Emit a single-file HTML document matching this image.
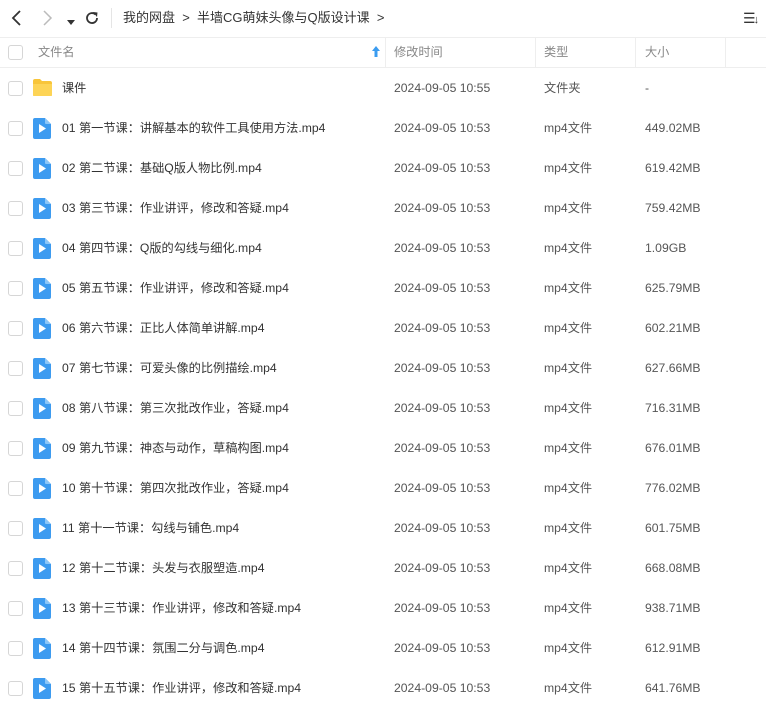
<!DOCTYPE html>
<html><head><meta charset="utf-8"><style>
body{margin:0;width:766px;height:713px;background:#fff;font-family:"Liberation Sans","Noto Sans CJK SC",sans-serif;color:#333;font-size:12.2px;overflow:hidden;position:relative}
.a{position:absolute;white-space:nowrap;line-height:16px}
.cb{position:absolute;left:8px;width:13px;height:13px;border:1px solid #d6d6d6;border-radius:3px;background:#fff}
.hd{color:#888}
.g{color:#555}
</style></head><body>
<div class="a" style="left:10px;top:9px">
<svg width="14" height="18" viewBox="0 0 14 18"><path d="M10 2 L3 9 L10 16" stroke="#333" stroke-width="1.8" fill="none"/></svg></div>
<div class="a" style="left:40px;top:9px"><svg width="14" height="18" viewBox="0 0 14 18"><path d="M4 2 L11 9 L4 16" stroke="#bbb" stroke-width="1.5" fill="none"/></svg></div>
<div class="a" style="left:67px;top:14px"><svg width="8" height="7"><path d="M0 1 L8 1 L4 6Z" fill="#333"/></svg></div>
<div class="a" style="left:84px;top:10px"><svg width="16" height="16" viewBox="0 0 16 16"><path d="M13 8 A5 5 0 1 1 11.5 4.5" stroke="#333" stroke-width="1.8" fill="none"/><path d="M9 2 L13.5 2.5 L13 7Z" fill="#333"/></svg></div>
<div class="a" style="left:111px;top:8px;width:1px;height:20px;background:#e5e5e5"></div>
<div class="a" style="left:123px;top:10px;font-size:13px">我的网盘 &nbsp;&gt;&nbsp; 半墙CG萌妹头像与Q版设计课 &nbsp;&gt;</div>
<div class="a" style="left:743px;top:10px;font-size:14px">☰<span style="font-size:11px;margin-left:-2px">↓</span></div>
<div class="a" style="left:0;top:37px;width:766px;height:1px;background:#eee"></div>
<div class="a" style="left:0;top:67px;width:766px;height:1px;background:#eee"></div>
<div class="a" style="left:385px;top:38px;width:1px;height:29px;background:#eee"></div>
<div class="a" style="left:535px;top:38px;width:1px;height:29px;background:#eee"></div>
<div class="a" style="left:635px;top:38px;width:1px;height:29px;background:#eee"></div>
<div class="a" style="left:725px;top:38px;width:1px;height:29px;background:#eee"></div>
<div class="cb" style="top:45px"></div>
<div class="a hd" style="left:38px;top:44px">文件名</div>
<svg class="a" style="left:372px;top:46px" width="8" height="11" viewBox="0 0 8 11"><path d="M4 0 L8 5 L5.5 5 L5.5 11 L2.5 11 L2.5 5 L0 5Z" fill="#3b9cf0"/></svg>
<div class="a hd" style="left:394px;top:44px">修改时间</div>
<div class="a hd" style="left:544px;top:44px">类型</div>
<div class="a hd" style="left:645px;top:44px">大小</div>
<div id="rows"></div>
<script>
const d=[["课件","2024-09-05 10:55","文件夹","-"],
["01 第一节课：讲解基本的软件工具使用方法.mp4","449.02MB"],
["02 第二节课：基础Q版人物比例.mp4","619.42MB"],
["03 第三节课：作业讲评，修改和答疑.mp4","759.42MB"],
["04 第四节课：Q版的勾线与细化.mp4","1.09GB"],
["05 第五节课：作业讲评，修改和答疑.mp4","625.79MB"],
["06 第六节课：正比人体简单讲解.mp4","602.21MB"],
["07 第七节课：可爱头像的比例描绘.mp4","627.66MB"],
["08 第八节课：第三次批改作业，答疑.mp4","716.31MB"],
["09 第九节课：神态与动作，草稿构图.mp4","676.01MB"],
["10 第十节课：第四次批改作业，答疑.mp4","776.02MB"],
["11 第十一节课：勾线与铺色.mp4","601.75MB"],
["12 第十二节课：头发与衣服塑造.mp4","668.08MB"],
["13 第十三节课：作业讲评，修改和答疑.mp4","938.71MB"],
["14 第十四节课：氛围二分与调色.mp4","612.91MB"],
["15 第十五节课：作业讲评，修改和答疑.mp4","641.76MB"]];
let h="";
d.forEach((r,i)=>{const c=88+i*40,t=c-8;
h+=`<div class="cb" style="top:${c-7}px"></div>`;
if(i==0)h+=`<svg class="a" style="left:32px;top:${c-10}px" width="21" height="19" viewBox="0 0 21 19"><path d="M1 3 Q1 1 3 1 L8 1 L10 3 L18 3 Q20 3 20 5 L20 17 Q20 18 19 18 L2 18 Q1 18 1 17Z" fill="#f8c53a"/><path d="M1 6 L20 6 L20 17 Q20 18 19 18 L2 18 Q1 18 1 17Z" fill="#fdd456"/></svg>`;
else h+=`<svg class="a" style="left:33px;top:${c-10}px" width="18" height="21" viewBox="0 0 18 21"><path d="M2 0 L12 0 L18 6 L18 19 Q18 21 16 21 L2 21 Q0 21 0 19 L0 2 Q0 0 2 0Z" fill="#3d9bf0"/><path d="M12 0 L18 6 L13 6 Q12 6 12 5Z" fill="#8cc6f8"/><path d="M6 6 L13 10.5 L6 15Z" fill="#fff"/></svg>`;
h+=`<div class="a" style="left:62px;top:${t}px">${r[0]}</div>`;
h+=`<div class="a g" style="left:394px;top:${t}px">${i==0?r[1]:"2024-09-05 10:53"}</div>`;
h+=`<div class="a g" style="left:544px;top:${t}px">${i==0?r[2]:"mp4文件"}</div>`;
h+=`<div class="a g" style="left:645px;top:${t}px">${i==0?r[3]:r[1]}</div>`;});
document.getElementById("rows").innerHTML=h;
</script>
</body></html>
